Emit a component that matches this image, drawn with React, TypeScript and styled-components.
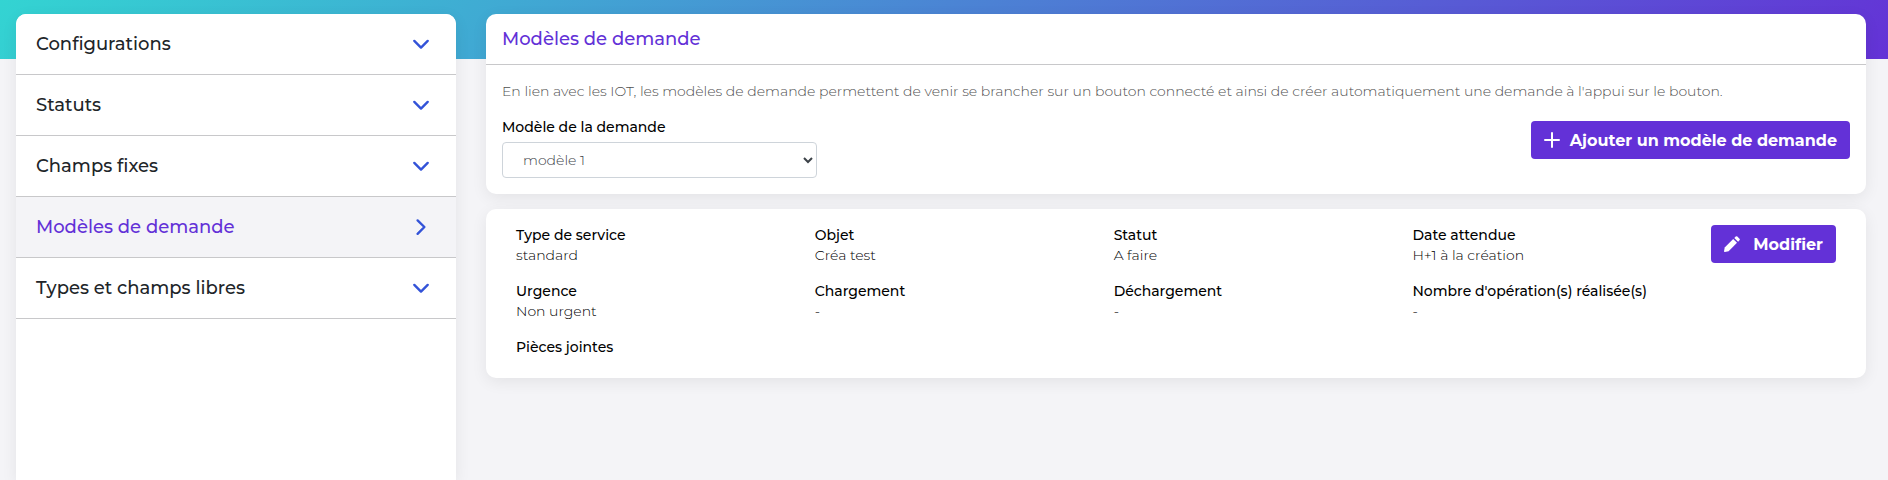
import React from "react";
import styled, { createGlobalStyle, css } from "styled-components";

const colors = {
  primary: "#6331d7",
  accent: "#3353d8",
  page: "#f4f4f7",
  border: "#c8c8ca",
};

const GlobalStyle = createGlobalStyle`
  *, *::before, *::after { box-sizing: border-box; }
  body {
    margin: 0;
    background: ${colors.page};
    color: #212529;
    font-family: Montserrat, Inter, sans-serif;
    font-size: 14px;
    line-height: 20px;
  }
`;

const Page = styled.div`
  display: grid;
  grid-template-columns: 22fr 69fr;
  gap: 30px;
  min-height: 100vh;
  padding: 14px 22px 0 16px;
  background: linear-gradient(135deg, #33d4d2 0%, #6432d6 100%) top / 100% 59px no-repeat;
`;

const cardShadow = css`
  box-shadow: 0 4px 16px rgba(0, 0, 0, 0.07);
`;

const Sidebar = styled.nav`
  overflow: hidden;
  border-radius: 10px 10px 0 0;
  background: #fff;
  ${cardShadow}
`;

const MenuLink = styled.a<{ $active?: boolean }>`
  display: flex;
  align-items: center;
  justify-content: space-between;
  height: 61px;
  padding: 0 23px 0 20px;
  border-bottom: 1px solid ${colors.border};
  background: ${(p) => (p.$active ? colors.page : "#fff")};
  color: ${(p) => (p.$active ? colors.primary : "#212529")};
  font-size: 18px;
  font-weight: 500;
  text-decoration: none;
`;

const Chevron = styled.svg`
  width: 24px;
  height: 24px;
  fill: none;
  stroke: ${colors.accent};
  stroke-width: 2.4;
  stroke-linecap: round;
  stroke-linejoin: round;
`;

const Content = styled.main`
  display: flex;
  flex-direction: column;
  gap: 15px;
`;

const Card = styled.section`
  border-radius: 10px;
  background: #fff;
  ${cardShadow}
`;

const CardTitle = styled.h1`
  margin: 0;
  padding: 15px 16px;
  border-bottom: 1px solid ${colors.border};
  color: ${colors.primary};
  font-size: 18px;
  font-weight: 500;
  line-height: 20px;
`;

const CardBody = styled.div`
  padding: 16px;
`;

const Description = styled.p`
  margin: 0 0 16px;
  color: #505050;
  font-weight: 300;
`;

const Toolbar = styled.div`
  display: flex;
  align-items: flex-start;
  justify-content: space-between;
`;

const Actions = styled.div`
  display: flex;
  padding-top: 4px;
`;

const FieldLabel = styled.label`
  display: block;
  margin-bottom: 5px;
  color: #000;
  font-weight: 500;
`;

const Select = styled.select`
  display: block;
  width: 315px;
  height: 36px;
  padding: 0 0 0 16px;
  border: 1px solid #ced4da;
  border-radius: 4px;
  background: #fff;
  color: #3c4248;
  font-family: inherit;
  font-size: 14px;
  font-weight: 300;
`;

const Button = styled.button<{ $gap: number }>`
  display: inline-flex;
  align-items: center;
  gap: ${(p) => p.$gap}px;
  height: 38px;
  padding: 0 13px;
  border: 0;
  border-radius: 4px;
  background: ${colors.primary};
  color: #fff;
  font-family: inherit;
  font-size: 16px;
  font-weight: 700;
  white-space: nowrap;
`;

const ButtonIcon = styled.svg`
  flex: none;
  width: 16px;
  height: 16px;
`;

const Summary = styled(Card)`
  display: flex;
  align-items: flex-start;
  padding: 16px 30px 21px;
`;

const Details = styled.dl`
  display: grid;
  flex: 1;
  grid-template-columns: repeat(4, 1fr);
  row-gap: 16px;
  margin: 0;
`;

const Term = styled.dt`
  color: #000;
  font-weight: 500;
`;

const Value = styled.dd`
  margin: 0;
  color: #000;
  font-weight: 300;
`;

const menu = [
  { label: "Configurations" },
  { label: "Statuts" },
  { label: "Champs fixes" },
  { label: "Modèles de demande", active: true },
  { label: "Types et champs libres" },
];

const details = [
  { label: "Type de service", value: "standard" },
  { label: "Objet", value: "Créa test" },
  { label: "Statut", value: "A faire" },
  { label: "Date attendue", value: "H+1 à la création" },
  { label: "Urgence", value: "Non urgent" },
  { label: "Chargement", value: "-" },
  { label: "Déchargement", value: "-" },
  { label: "Nombre d'opération(s) réalisée(s)", value: "-" },
  { label: "Pièces jointes" },
];

export default function App() {
  return (
    <>
      <GlobalStyle />
      <Page>
        <Sidebar>
          {menu.map(({ label, active }) => (
            <MenuLink key={label} href="#" $active={active}>
              {label}
              <Chevron viewBox="0 0 24 24" aria-hidden="true">
                <path d={active ? "M8.600 5.400 15.400 12 8.600 18.800" : "M5.300 8.900 12 15.600 18.700 8.900"} />
              </Chevron>
            </MenuLink>
          ))}
        </Sidebar>
        <Content>
          <Card>
            <CardTitle>Modèles de demande</CardTitle>
            <CardBody>
              <Description>
                En lien avec les IOT, les modèles de demande permettent de venir se brancher sur un
                bouton connecté et ainsi de créer automatiquement une demande à l'appui sur le bouton.
              </Description>
              <Toolbar>
                <div>
                  <FieldLabel htmlFor="template">Modèle de la demande</FieldLabel>
                  <Select id="template" defaultValue="1">
                    <option value="1">modèle 1</option>
                  </Select>
                </div>
                <Actions>
                  <Button type="button" $gap={10}>
                    <ButtonIcon viewBox="0 0 16 16" aria-hidden="true">
                      <path d="M8 1v14M1 8h14" stroke="#fff" strokeWidth="2" strokeLinecap="round" />
                    </ButtonIcon>
                    Ajouter un modèle de demande
                  </Button>
                </Actions>
              </Toolbar>
            </CardBody>
          </Card>
          <Summary>
            <Details>
              {details.map(({ label, value }) => (
                <div key={label}>
                  <Term>{label}</Term>
                  {value && <Value>{value}</Value>}
                </div>
              ))}
            </Details>
            <Button type="button" $gap={13}>
              <ButtonIcon viewBox="0 0 16 16" fill="#fff" aria-hidden="true">
                <path d="M9.2 3 13 6.8 4.6 15.2 0.8 16Q0 16 0 15.200L.7 11.500Z" />
                <path d="M10.300 1.900 11.700.5Q12.500-.2 13.300.5L15.500 2.700Q16.200 3.500 15.500 4.300L14.100 5.700Z" />
              </ButtonIcon>
              Modifier
            </Button>
          </Summary>
        </Content>
      </Page>
    </>
  );
}
